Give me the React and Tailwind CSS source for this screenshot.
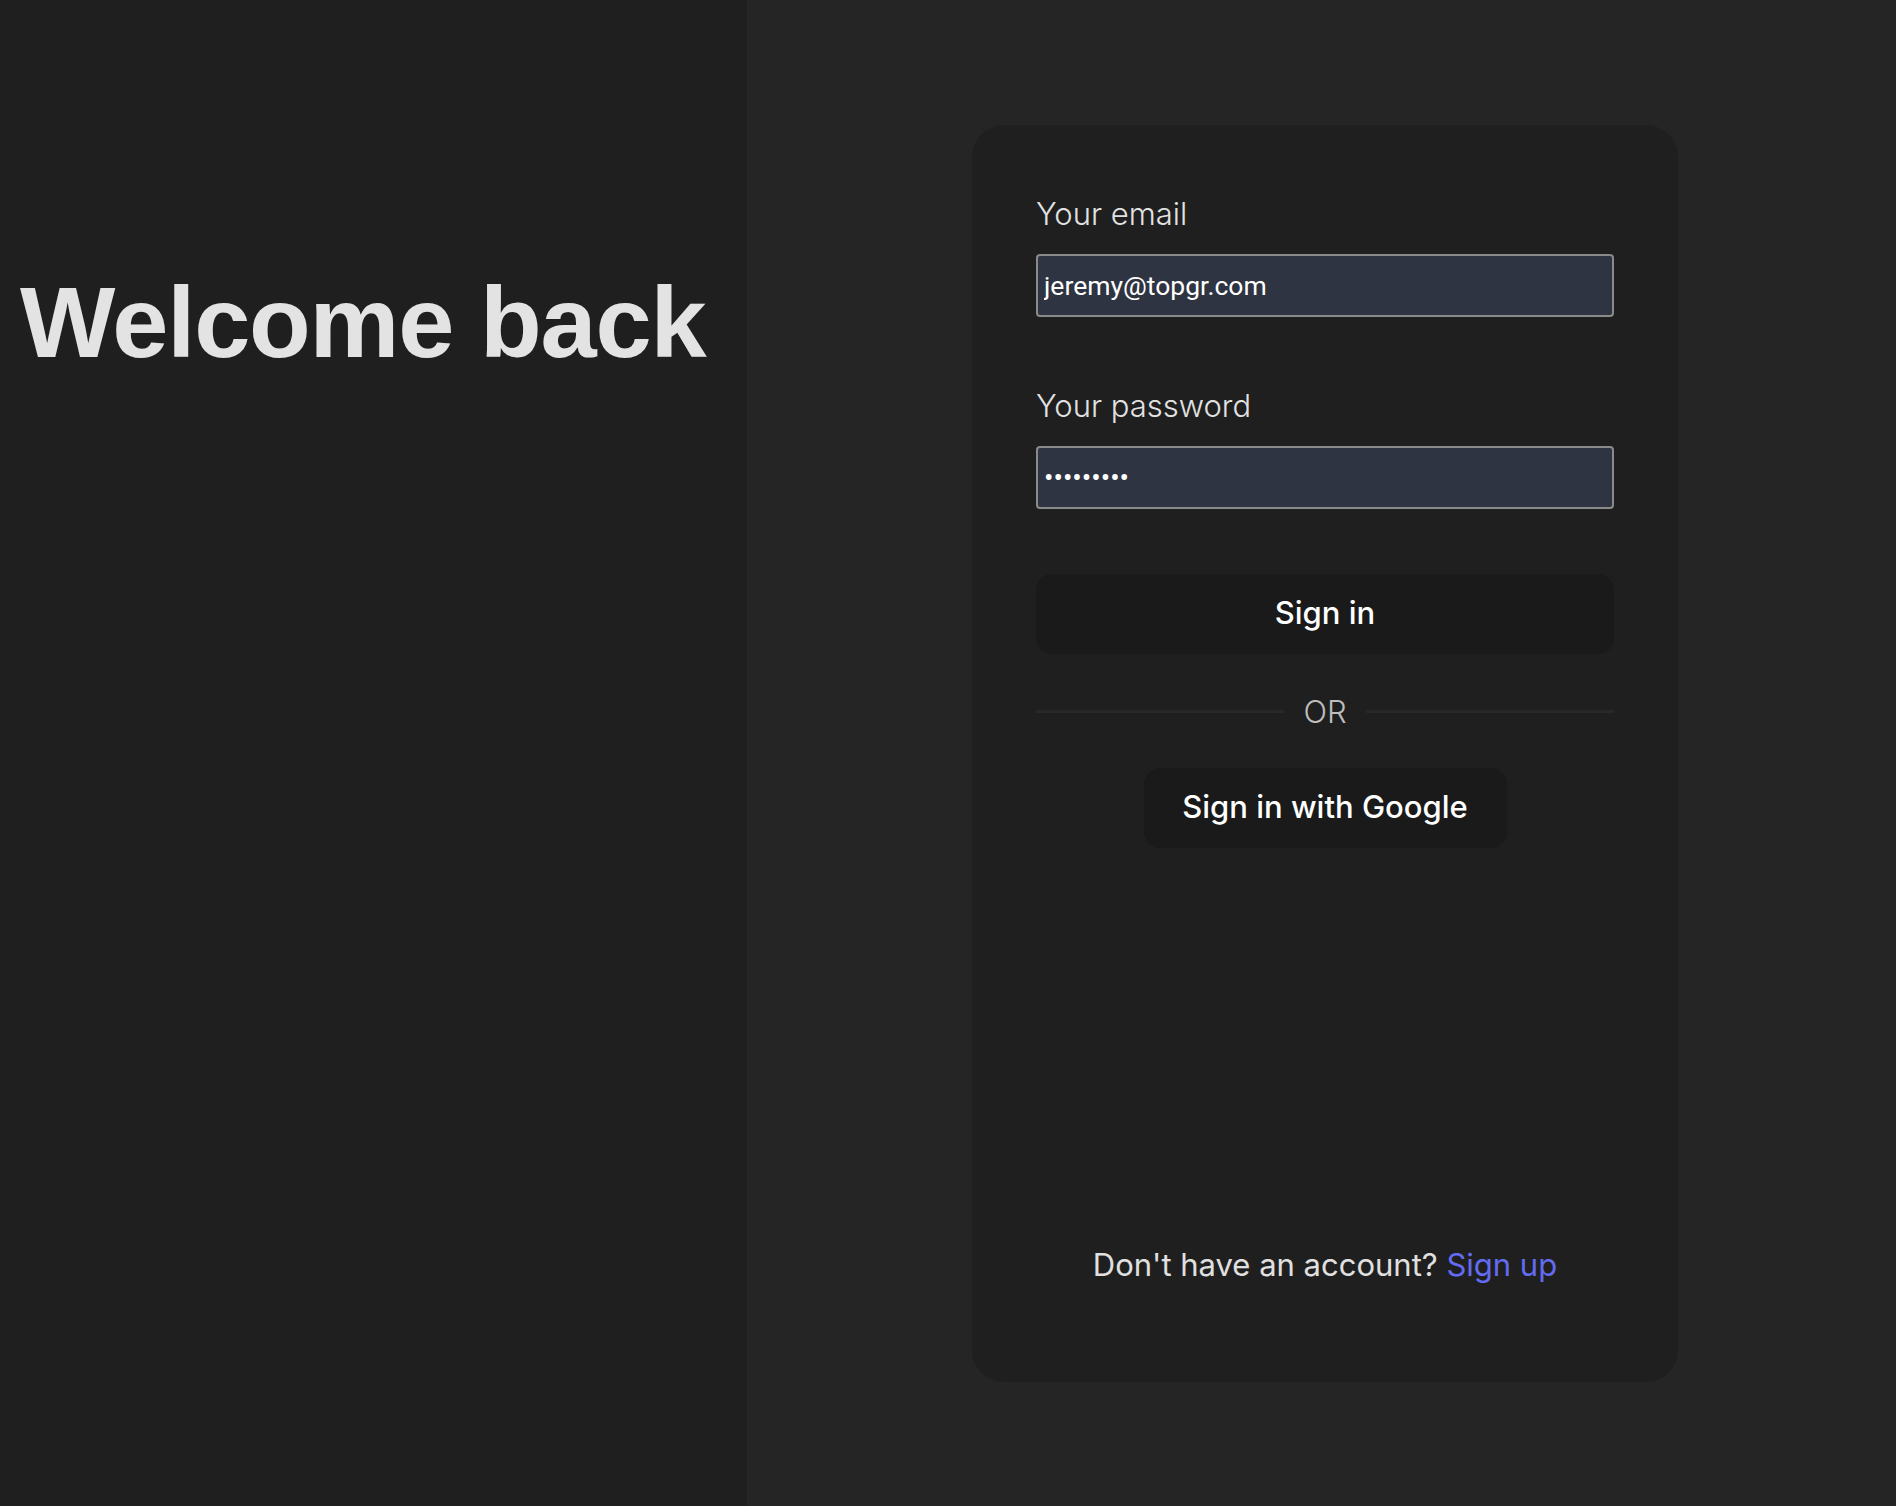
export default function App() {
  return (
    <div className="flex h-[1506px] w-full font-['Inter',sans-serif]">
      {/* Left side */}
      <div className="w-[747px] shrink-0 bg-[#1f1f1f] pt-[272px] pl-[20px]">
        <h1 className="font-['Liberation_Sans',Arial,sans-serif] text-[101px] font-bold leading-none tracking-[-1.2px] text-[#e3e3e3]">
          Welcome back
        </h1>
      </div>

      {/* Right side */}
      <div className="flex flex-1 items-center justify-center bg-[#252525] pl-[7px]">
        <div className="flex h-[1257px] w-[706px] flex-col rounded-[32px] bg-[#1f1f1f] px-[64px] pt-[71px] pb-[97px]">
          <label className="text-[31px] font-light leading-[36px] text-[#e2e2e2]">Your email</label>
          <input
            type="email"
            defaultValue="jeremy@topgr.com"
            className="mt-[22px] h-[63px] w-full rounded-[4px] border-2 border-[#8a8a8a] bg-[#2e3441] px-[6px] font-['Roboto',sans-serif] text-[26.5px] text-white outline-none"
          />

          <label className="mt-[71px] text-[31px] font-light leading-[36px] text-[#e2e2e2]">Your password</label>
          <input
            type="password"
            defaultValue="123456789"
            className="mt-[22px] h-[63px] w-full rounded-[4px] border-2 border-[#8a8a8a] bg-[#2e3441] px-[6px] font-['Roboto',sans-serif] text-[28px] text-white outline-none"
          />

          <button className="mt-[65px] h-[80px] w-full rounded-[16px] bg-[#1a1a1a] text-[31px] font-medium text-white">
            Sign in
          </button>

          <div className="mt-[40px] flex items-center">
            <div className="h-[3px] flex-1 bg-[#282828]" />
            <span className="w-[82px] text-center text-[31px] font-light leading-[36px] text-[#bdbdbd]">OR</span>
            <div className="h-[3px] flex-1 bg-[#282828]" />
          </div>

          <div className="mt-[38px] flex justify-center">
            <button className="h-[80px] w-[363px] rounded-[16px] bg-[#1a1a1a] text-[31px] font-medium text-white">
              Sign in with Google
            </button>
          </div>

          <p className="mt-auto text-center text-[31px] leading-[40px] text-[#e0e0e0]">
            Don't have an account? <a className="text-[#636bf0]">Sign up</a>
          </p>
        </div>
      </div>
    </div>
  )
}
